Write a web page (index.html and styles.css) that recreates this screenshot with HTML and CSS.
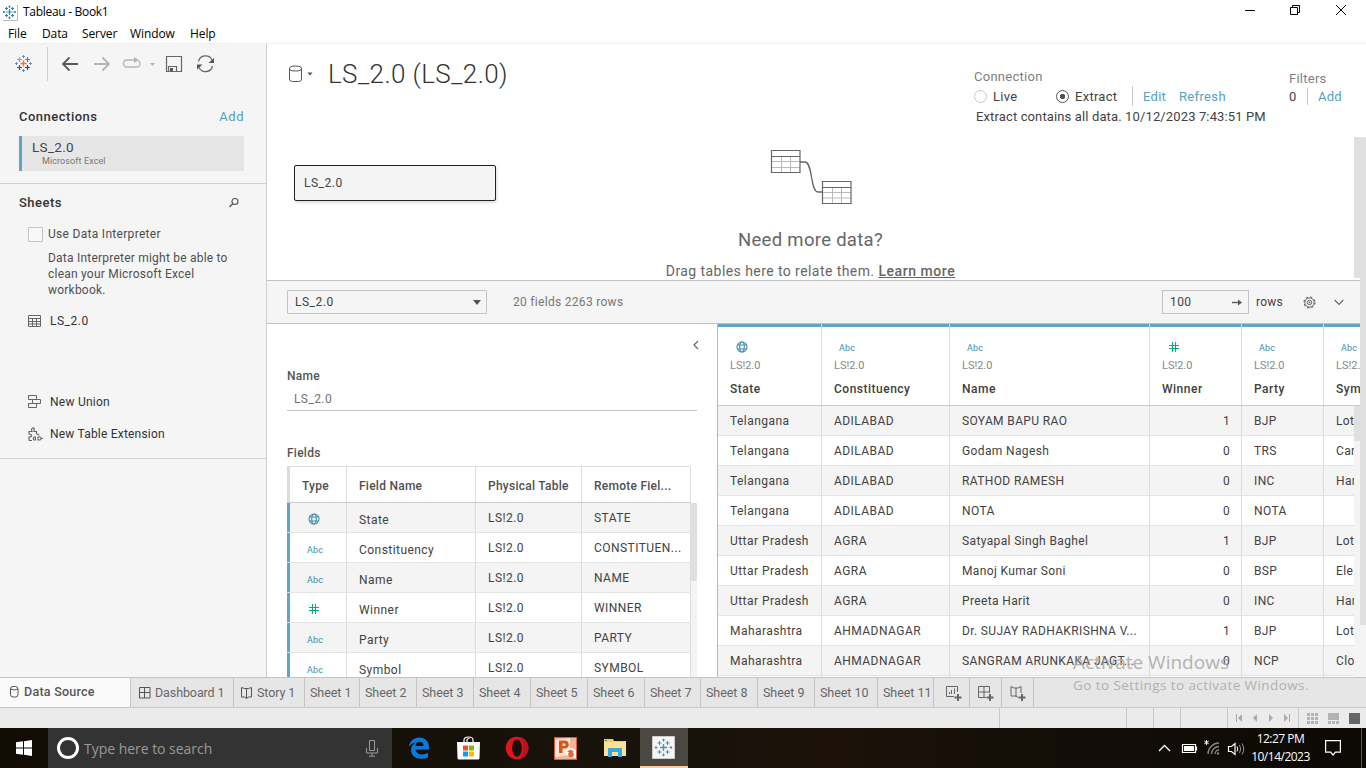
FILE: index.html
```html
<!DOCTYPE html>
<html lang="en">
<head>
<meta charset="utf-8">
<title>Tableau - Book1</title>
<link rel="stylesheet" href="styles.css">
</head>
<body>
<svg class="defs" width="0" height="0">
  <symbol id="globe" viewBox="0 0 12 12"><g fill="none" stroke="#3f8dab" stroke-width="1.100"><circle cx="6" cy="6" r="5"/><ellipse cx="6" cy="6" rx="2.300" ry="5"/><path d="M1.500 4h9M1.500 8h9"/></g></symbol>
  <symbol id="hash" viewBox="0 0 10 10"><path d="M3.500 0v10M6.500 0v10M0 3.500h10M0 6.500h10" stroke="#00b180" stroke-width="1" fill="none"/></symbol>
  <symbol id="plusmark" viewBox="0 0 18 18"><path d="M9 5.500v7M5.500 9h7" stroke-width="1.400"/><path d="M5 2.500v4M3 4.500h4M13 2.500v4M11 4.500h4M5 11.500v4M3 13.500h4M13 11.500v4M11 13.500h4M9 0v3M7.500 1.500h3M9 15v3M7.500 16.500h3M1.500 7.500v3M0 9h3M16.500 7.500v3M15 9h3"/></symbol>
</svg>
<div class="window">
  <header class="titlebar">
    <svg class="app" width="16" height="18" viewBox="0 0 16 18"><path d="M15.500 2v15.500H1" stroke="#bbb" fill="none"/><g stroke="#2f86b0" fill="none" stroke-width="1.200"><path d="M7.500 6v6M4.500 9h6M4.500 4v3M3 5.500h3M10.500 4v3M9 5.500h3M4.500 11v3M3 12.500h3M10.500 11v3M9 12.500h3M7.500 2.500v2.500M6.500 3.500h2M7.500 13.500v2.500M6.500 14.500h2M1 9h2.500M2 8v2M11.500 9h2.500M13 8v2"/></g></svg>
    <span class="caption">Tableau - Book1</span>
    <svg class="controls" width="110" height="12" viewBox="0 0 110 12" fill="none" stroke="#000"><path d="M1 6.500h10M46.500 3.500h7v7h-7zM48.500 3.500v-2h7v7h-2M92 1l10 10M102 1l-10 10"/></svg>
  </header>
  <nav class="menubar"><span>File</span><span>Data</span><span>Server</span><span>Window</span><span>Help</span></nav>

  <div class="body">
    <aside class="sidebar">
      <div class="tools">
        <svg width="220" height="36" viewBox="0 0 220 36" fill="none">
          <path d="M23.500 13.500v6M20.500 16.500h6" stroke="#e8762d" stroke-width="1.400"/>
          <path d="M19.500 10v5M17 12.500h5" stroke="#e8912d" stroke-width="1.200"/><path d="M27.500 10v5M25 12.500h5" stroke="#5b879b" stroke-width="1.200"/>
          <path d="M19.500 18v5M17 20.500h5" stroke="#c72037" stroke-width="1.200"/><path d="M27.500 18v5M25 20.500h5" stroke="#1f457e" stroke-width="1.200"/>
          <path d="M23.500 8v3M22 9.500h3M23.500 22v3M22 23.500h3M16.500 15v3M15 16.500h3M30.500 15v3M29 16.500h3" stroke="#6f8fb0"/>
          <path d="M47.500 0v34" stroke="#d0d0d0"/>
          <g stroke-width="1.800"><path d="M78 17H63M69.500 10.500L63 17l6.500 6.500" stroke="#5a5a5a"/><path d="M94 17h15M102.500 10.500L109 17l-6.500 6.500" stroke="#b5b5b5"/></g>
          <path d="M135 13h-8q-3.500 0-3.500 3.500t3.500 3.500h9.500q3.500 0 3.500-3.500 0-2-1.500-3" stroke="#b5b5b5" stroke-width="1.300"/><path d="M134 10l5 3-5 3z" fill="#b5b5b5"/><path d="M150 16h5l-2.500 3z" fill="#b5b5b5"/>
          <path d="M166.500 9.500h15v15h-15zM168.500 24v-4.500h8v4.500" stroke="#666" stroke-width="1.200"/><path d="M170 21h3v3h-3z" fill="#555"/>
          <path d="M198.500 14.500a7.200 7.200 0 0 1 13.500-1.500M212.500 19a7.200 7.200 0 0 1-13.500 1.500" stroke="#666" stroke-width="1.200"/><path d="M214 11v5h-5.500zM197 22.500v-5h5.500z" fill="#555"/>
        </svg>
      </div>
      <section class="connections">
        <div class="head"><b>Connections</b><a>Add</a></div>
        <div class="conn"><span>LS_2.0</span><small>Microsoft Excel</small></div>
      </section>
      <section class="sheets">
        <div class="head"><b>Sheets</b><svg width="12" height="12" viewBox="0 0 12 12" fill="none" stroke="#555"><circle cx="7" cy="5.500" r="3" stroke-width="1.100"/><path d="M4.700 7.800L1.500 11" stroke-width="1.300"/></svg></div>
        <label class="interp"><i></i><span>Use Data Interpreter</span></label>
        <p>Data Interpreter might be able to<br>clean your Microsoft Excel<br>workbook.</p>
        <div class="item first"><svg width="16" height="14" viewBox="0 0 16 14" fill="none" stroke="#666"><path d="M.5 1.500h12v11H.5zM.5 4.500h12M.5 7.500h12M.5 10h12M4.500 4.500v8M8.500 4.500v8"/></svg>LS_2.0</div>
        <div class="item union"><svg width="16" height="14" viewBox="0 0 16 14" fill="none" stroke="#666"><path d="M.5.500h8v4h-8zM4.500 4.500h8v4h-8zM.5 8.500h8v4h-8z"/></svg>New Union</div>
        <div class="item ext"><svg width="16" height="15" viewBox="0 0 16 15" fill="none" stroke="#666" stroke-width="1.200"><path d="M1 13.500V10q2.500 0 2.500-1.500T1 7V4.500h3Q2.800 1.500 4.800 1T6 4.500h2.500V7q2.500 0 2.500 1.500M1 13.500h3"/><path d="M7.500 10H6q-1.500 1.500 0 3h1.500zM10 10h2q2 1.500 0 3h-2zM13 11.500h2" stroke-width="1.100"/></svg>New Table Extension</div>
      </section>
    </aside>

    <main>
      <div class="top">
        <svg class="ds" width="26" height="18" viewBox="0 0 26 18" fill="none" stroke="#555"><path d="M.5 3.500v10.500q0 2.500 3 2.500h6q3 0 3-2.500V3.500M.5 3.500q0-2.500 6-2.500t6 2.500-6 2.500-6-2.500z"/><path d="M18.500 7.500h5l-2.500 3z" fill="#555" stroke="none"/></svg>
        <h1>LS_2.0 (LS_2.0)</h1>
        <div class="cinfo">
          <div class="lbl">Connection</div>
          <div class="opts"><i class="radio"></i><span class="live">Live</span><i class="radio on"></i><span class="extract">Extract</span><u></u><a class="edit">Edit</a><a class="refresh">Refresh</a></div>
          <div class="stamp">Extract contains all data. 10/12/2023 7:43:51 PM</div>
        </div>
        <div class="filters"><div class="lbl">Filters</div><div class="opts"><span>0</span><u></u><a>Add</a></div></div>
      </div>
      <div class="lower">
        <div class="content">
          <div class="canvas">
            <div class="node">LS_2.0</div>
            <div class="hint">
              <svg width="82" height="56" viewBox="0 0 82 56" fill="none"><path d="M2 11.500h28M2 17.500h28M11.500 6v16M20.500 6v16M53 42.500h28M53 48h28M62.500 37v16M71.500 37v16" stroke="#bbb"/><path d="M1.500 .500h28.500v22H1.500zM1.500 6.500h28.500M52.500 31.500h28.500v22H52.500zM52.500 37.500h28.500" stroke="#666" stroke-width="1.200"/><path d="M30 12h5c8 0 5 30 13 30h4.500" stroke="#666" stroke-width="1.300"/></svg>
              <div class="need">Need more data?</div>
              <div class="drag">Drag tables here to relate them. <b>Learn more</b></div>
            </div>
            <i class="thumb"></i>
          </div>
          <div class="bar">
            <div class="select">LS_2.0<svg width="8" height="5"><path d="M0 0h8L4 5z" fill="#555"/></svg></div>
            <span class="count">20 fields 2263 rows</span>
            <div class="num">100<svg width="10" height="7" viewBox="0 0 10 7"><path d="M0 3.500h8" stroke="#555" stroke-width="1.300"/><path d="M6 .500l4 3-4 3z" fill="#555"/></svg></div>
            <span class="rows">rows</span>
            <svg class="gear" width="13" height="13" viewBox="0 0 13 13" fill="none" stroke="#666"><circle cx="6.500" cy="6.500" r="4.600"/><circle cx="6.500" cy="6.500" r="5.500" stroke-width="1.100" stroke-dasharray="2.160 2.160"/><circle cx="6.500" cy="6.500" r="2.200"/><circle cx="6.500" cy="6.500" r=".5"/></svg>
            <svg class="chev" width="10" height="7" viewBox="0 0 10 7" fill="none" stroke="#666" stroke-width="1.200"><path d="M.7 1L5 5.500 9.300 1"/></svg>
          </div>
          <div class="data">
            <section class="meta">
              <svg class="collapse" width="6" height="10" viewBox="0 0 6 10" fill="none" stroke="#666" stroke-width="1.200"><path d="M5 1L1 5l4 4"/></svg>
              <div class="mlabel">Name</div>
              <div class="field">LS_2.0</div>
              <div class="mlabel two">Fields</div>
              <div class="ftable">
                <div class="fr fh"><span>Type</span><span>Field Name</span><span>Physical Table</span><span>Remote Fiel...</span></div>
                <div class="frows">
                  <div class="flist">
                    <div class="fr"><span class="t"><svg class="globe"><use href="#globe"/></svg></span><span>State</span><span>LS!2.0</span><span>STATE</span></div>
                    <div class="fr"><span class="t">Abc</span><span>Constituency</span><span>LS!2.0</span><span>CONSTITUEN...</span></div>
                    <div class="fr"><span class="t">Abc</span><span>Name</span><span>LS!2.0</span><span>NAME</span></div>
                    <div class="fr"><span class="t"><svg class="hash"><use href="#hash"/></svg></span><span>Winner</span><span>LS!2.0</span><span>WINNER</span></div>
                    <div class="fr"><span class="t">Abc</span><span>Party</span><span>LS!2.0</span><span>PARTY</span></div>
                    <div class="fr"><span class="t">Abc</span><span>Symbol</span><span>LS!2.0</span><span>SYMBOL</span></div>
                  </div>
                  <div class="fscroll"><i></i></div>
                </div>
              </div>
            </section>
            <section class="grid">
              <div class="gr gh">
                <div><em><svg class="globe"><use href="#globe"/></svg></em><small>LS!2.0</small><b>State</b></div>
                <div><em>Abc</em><small>LS!2.0</small><b>Constituency</b></div>
                <div><em>Abc</em><small>LS!2.0</small><b>Name</b></div>
                <div><em><svg class="hash"><use href="#hash"/></svg></em><small>LS!2.0</small><b>Winner</b></div>
                <div><em>Abc</em><small>LS!2.0</small><b>Party</b></div>
                <div><em>Abc</em><small>LS!2.0</small><b>Symbol</b></div>
              </div>
              <div class="grows">
                <div class="glist">
                  <div class="gr"><span>Telangana</span><span>ADILABAD</span><span>SOYAM BAPU RAO</span><span>1</span><span>BJP</span><span>Lot</span></div>
                  <div class="gr"><span>Telangana</span><span>ADILABAD</span><span>Godam Nagesh</span><span>0</span><span>TRS</span><span>Car</span></div>
                  <div class="gr"><span>Telangana</span><span>ADILABAD</span><span>RATHOD RAMESH</span><span>0</span><span>INC</span><span>Han</span></div>
                  <div class="gr"><span>Telangana</span><span>ADILABAD</span><span>NOTA</span><span>0</span><span>NOTA</span><span></span></div>
                  <div class="gr"><span>Uttar Pradesh</span><span>AGRA</span><span>Satyapal Singh Baghel</span><span>1</span><span>BJP</span><span>Lot</span></div>
                  <div class="gr"><span>Uttar Pradesh</span><span>AGRA</span><span>Manoj Kumar Soni</span><span>0</span><span>BSP</span><span>Ele</span></div>
                  <div class="gr"><span>Uttar Pradesh</span><span>AGRA</span><span>Preeta Harit</span><span>0</span><span>INC</span><span>Han</span></div>
                  <div class="gr"><span>Maharashtra</span><span>AHMADNAGAR</span><span>Dr. SUJAY RADHAKRISHNA V...</span><span>1</span><span>BJP</span><span>Lot</span></div>
                  <div class="gr"><span>Maharashtra</span><span>AHMADNAGAR</span><span>SANGRAM ARUNKAKA JAGT...</span><span>0</span><span>NCP</span><span>Clo</span></div>
                  <div class="gr"><span></span><span></span><span></span><span></span><span></span><span></span></div>
                </div>
                <div class="gscroll"><i></i></div>
              </div>
            </section>
          </div>
        </div>
        <div class="vscroll"><i></i></div>
      </div>
    </main>
  </div>

  <div class="tabs">
    <span class="active"><svg width="9" height="12" viewBox="0 0 9 12" fill="none" stroke="#555"><rect x=".5" y=".5" width="7.500" height="10.500" rx="2.500"/><path d="M.5 3q3.700 2 7.500 0"/></svg>Data Source</span>
    <span><svg width="12" height="12" viewBox="0 0 12 12" fill="none" stroke="#555"><path d="M.5.500h10.500v10.500H.5zM5.500.500v10.500M.5 5.500h10.500"/></svg>Dashboard 1</span>
    <span><svg width="12" height="12" viewBox="0 0 12 12" fill="none" stroke="#555"><path d="M.5.500l3 1h4l3-1v9.500l-3 0-2 1.500-2-1.500-3 0zM5.500 2v9"/></svg>Story 1</span>
    <span>Sheet 1</span><span>Sheet 2</span><span>Sheet 3</span><span>Sheet 4</span><span>Sheet 5</span><span>Sheet 6</span><span>Sheet 7</span><span>Sheet 8</span><span>Sheet 9</span><span>Sheet 10</span><span>Sheet 11</span>
    <span class="new"><svg width="17" height="16" viewBox="0 0 17 16" fill="none" stroke="#666"><path d="M8 10.500H.500V.500h11V6M3.500 8V6M5.500 8V4M8.500 8V2.500"/><path d="M12 8v7M8.500 11.500h7" stroke-width="2"/></svg></span>
    <span class="new"><svg width="17" height="16" viewBox="0 0 17 16" fill="none" stroke="#666"><path d="M8 11.500H.500V.500h11V7M6 .500v11M.5 6h11"/><path d="M12 8v7M8.500 11.500h7" stroke-width="2"/></svg></span>
    <span class="new"><svg width="17" height="16" viewBox="0 0 17 16" fill="none" stroke="#666"><path d="M8 11.500l-2-1.500-2 0H1V.500l3 1.500h4l3-1.500V7M6 2v9"/><path d="M12 8v7M8.500 11.500h7" stroke-width="2"/></svg></span>
  </div>
  <div class="status">
    <span></span><span></span><span></span><span></span>
    <span class="pager"><svg width="58" height="8" viewBox="0 0 58 8" fill="#aaa"><path d="M1 0h1v8H1zM7 0v8L3 4zM22 0v8l-4-4zM34 0v8l4-4zM49 0v8l4-4zM54 0h1v8h-1z"/></svg></span>
    <span class="views"><svg width="54" height="11" viewBox="0 0 54 11" fill="#b3b3b3"><path d="M0 0h3v3H0zM4 0h3v3H4zM8 0h3v3H8zM0 4h3v3H0zM4 4h3v3H4zM8 4h3v3H8zM0 8h3v3H0zM4 8h3v3H4zM8 8h3v3H8zM21 0h11v7H21zM21 8h3v3h-3zM25 8h3v3h-3zM29 8h3v3h-3z"/><path d="M42 0h11v11H42z" fill="#666"/></svg></span>
  </div>

  <footer class="taskbar">
    <div class="start"><svg width="16" height="16" viewBox="0 0 16 16" fill="#fff"><path d="M0 2.300l7-1v6.200H0zM8 1.200L16 0v7.500H8zM0 8.500h7v6.200l-7-1zM8 8.500h8V16l-8-1.200z"/></svg></div>
    <div class="search"><i></i><span>Type here to search</span><svg width="12" height="17" viewBox="0 0 12 17" fill="none" stroke="#999"><path d="M3.500.500h5v10h-5zM.5 8v5h11V8M6 13v3M3 16.200h6"/></svg></div>
    <div class="apps">
      <span><svg width="22" height="22" viewBox="0 0 22 22"><path d="M1 10C1.500 4 6 .5 11.500.5 17.500.5 21 5 21 10v2.500H7.500c.3 3.500 3.500 5 6.500 5 2.500 0 4.500-.8 6-1.700v4.400c-2 1.100-4.500 1.600-7 1.600C7 21.800 3 18 3 13c0-3.500 2-6 5-7.500C4.500 6 2.500 7.800 1 10zM7.500 9h8c0-2.800-1.400-4.200-3.800-4.200S7.800 6.300 7.500 9z" fill="#0a7ada"/></svg></span>
      <span><svg width="23" height="24" viewBox="0 0 23 24"><path d="M7 6.500V4q0-3 4.500-3T16 4v2.500M10 6.500V4q0-1.500 2.500-1.500" fill="none" stroke="#fff" stroke-width="1.200"/><path d="M0 6h23l-.5 16q0 1.500-1.500 1.500H2Q.5 23.500.5 22z" fill="#fff"/><path d="M6 9.500h5v5H6z" fill="#f25022"/><path d="M12 9.500h5v5h-5z" fill="#7fba00"/><path d="M6 15.500h5v5H6z" fill="#00a4ef"/><path d="M12 15.500h5v5h-5z" fill="#ffb900"/></svg></span>
      <span><svg width="24" height="24" viewBox="0 0 24 24"><ellipse cx="12" cy="12" rx="11.300" ry="11.300" fill="#e0141f"/><path d="M14 1c6 .5 9.500 5.500 9.500 11S20 22.500 14 23c3-2 4-6.500 4-11s-1-9-4-11z" fill="#b9121c"/><ellipse cx="12" cy="12" rx="4.800" ry="8.800" fill="#15110a"/></svg></span>
      <span><svg width="23" height="23" viewBox="0 0 23 23"><path d="M.5.500h22v22H.5z" fill="#f3b49a" stroke="#e2592c"/><path d="M1 3L16 1v17L1 20z" fill="#fbe5db"/><path d="M5 3.500h6c5 0 5 8 0 8H8.500V16H5zM8.500 6.500v2.500h2c1.500 0 1.500-2.500 0-2.500z" fill="#d9571b" fill-rule="evenodd"/><path d="M12 13l5-2 5 2v8l-5-1-5-3z" fill="#fff"/><path d="M13 14.500l3.500-2 3.500 2-3.500 1.500z" fill="#e8663a"/><circle cx="17" cy="17.500" r="2.800" fill="#e8663a"/></svg></span>
      <span><svg width="22" height="20" viewBox="0 0 22 20"><path d="M0 1h9l1 2h12v15H0z" fill="#f6ce5a"/><path d="M0 4h22v14H0z" fill="#fde292"/><path d="M4 19v-8q0-1 1-1h12q1 0 1 1v8h-4v-5H8v5z" fill="#35a9e6"/><path d="M1 2h2v1H1z" fill="#3a9b50"/></svg></span>
      <span class="on"><svg width="23" height="23" viewBox="0 0 23 23"><path d="M.5.500h22v22H.5z" fill="#f5f5f5" stroke="#ccc"/><g stroke="#4c8fb5" fill="none"><use href="#plusmark" x="2.500" y="2.500" width="18" height="18"/></g></svg></span>
    </div>
    <div class="tray">
      <svg width="90" height="18" viewBox="0 0 90 18" fill="none" stroke="#fff"><path d="M1 12l5.500-5.500L12 12" stroke-width="1.300"/><path d="M24.500 5.500h13v8h-13zM38.500 7.500v4" stroke-width="1.200"/><path d="M26 7h10v5H26z" fill="#fff" stroke="none"/><g stroke="#888" stroke-width="1.300"><path d="M50 15a11 11 0 0 1 11-11M53.500 15A7.500 7.500 0 0 1 61 7.500M57 15a4 4 0 0 1 4-4"/></g><circle cx="60" cy="14.500" r="1.200" fill="#888" stroke="none"/><path d="M48.500 1v5M46.300 2.200l4.400 2.600M50.700 2.200l-4.400 2.600"/><path d="M70.500 7.500h3l3.500-3v11l-3.500-3h-3z" stroke-width="1.200"/><path d="M79 7.500q1.500 2.500 0 5"/><path d="M81.500 6q2.500 4 0 8M84 4.500q3.500 5.500 0 11" stroke="#999"/></svg>
      <div class="clock"><span>12:27 PM</span><span>10/14/2023</span></div>
      <svg class="note" width="16" height="16" viewBox="0 0 16 16" fill="none" stroke="#fff" stroke-width="1.200"><path d="M.6.600h14.800v11.500h-5L8 15l-2.400-2.900h-5z"/></svg>
      <i class="peek"></i>
    </div>
  </footer>
  <div class="watermark"><span>Activate Windows</span><small>Go to Settings to activate Windows.</small></div>
</div>
</body>
</html>
```
FILE: styles.css
```css
* { box-sizing: border-box; }
body { margin: 0; font-family: Roboto, sans-serif; font-size: 12px; letter-spacing: .25px; color: #424242; }
svg { display: block; flex: none; }
.defs { position: absolute; }
i, em { font-style: normal; }
b { font-weight: 500; }
a { color: #56a0bd; }
.window { position: relative; width: 1366px; height: 768px; overflow: hidden; display: flex; flex-direction: column; background: #fff; }

.titlebar { height: 23px; flex: none; display: flex; align-items: center; padding-left: 2px; font-family: "Open Sans", sans-serif; color: #000; letter-spacing: -.3px; }
.caption { margin-left: 5px; line-height: 23px; }
.controls { margin: -3px 12px 0 auto; }
.menubar { height: 20px; flex: none; display: grid; grid-template-columns: 34px 40px 48px 60px auto; padding-left: 8px; font: 12px/21px "Open Sans", sans-serif; color: #000; letter-spacing: -.1px; }
.body { height: 634px; flex: none; display: flex; }

.sidebar { width: 267px; flex: none; background: #f5f5f5; border-right: 1px solid #d0d0d0; border-top: 1px solid #eee; }
.tools { height: 58px; padding-top: 3px; }
.head { display: flex; justify-content: space-between; align-items: center; height: 20px; }
.head b { font-size: 13px; letter-spacing: .5px; color: #333; }
.head a { font-size: 13px; letter-spacing: .5px; }
.connections { height: 82px; padding: 4px 22px 0 19px; border-bottom: 1px solid #d0d0d0; }
.conn { margin-top: 10px; height: 35px; background: #e6e6e6; border-left: 3px solid #5fa5c6; padding: 3px 0 0 10px; }
.conn span { display: block; font-size: 13.500px; line-height: 16px; color: #444; letter-spacing: .3px; }
.conn small { display: block; font-size: 9px; line-height: 13px; margin-left: 10px; color: #777; letter-spacing: .1px; }
.sheets { height: 275px; padding: 8px 0 0 19px; border-bottom: 1px solid #d0d0d0; }
.sheets .head { padding-right: 26px; }
.interp { display: flex; height: 16px; align-items: center; margin: 14px 0 0 9px; color: #4c4c4c; letter-spacing: .3px; }
.interp i { width: 15px; height: 15px; border: 1px solid #c4c4c4; background: #f8f8f8; margin-right: 5px; border-radius: 1px; }
.sheets p { margin: 8px 0 0 29px; line-height: 16px; color: #505050; letter-spacing: .22px; }
.item { display: flex; align-items: center; height: 20px; margin-left: 9px; gap: 6px; color: #333; }
.first { margin-top: 13px; letter-spacing: .5px; }
.union { margin-top: 61px; }
.ext { margin-top: 12px; letter-spacing: .2px; }

main { flex: 1; display: flex; flex-direction: column; min-width: 0; }
.top { height: 94px; border-top: 1px solid #eee; display: flex; align-items: flex-start; padding-left: 22px; }
.ds { margin-top: 21px; }
h1 { margin: 14px 0 0 13px; font-weight: 300; font-size: 26px; line-height: 32px; letter-spacing: .4px; color: #333; }
.cinfo { margin: 23px 0 0 auto; width: 315px; font-size: 13px; letter-spacing: .27px; }
.lbl { color: #808080; line-height: 20px; font-size: 13px; }
.cinfo .opts { margin-top: -1px; }
.opts { display: flex; align-items: center; height: 20px; }
.opts u { width: 1px; height: 20px; background: #c8c8c8; }
.radio { width: 13px; height: 13px; border: 1px solid #c8c8c8; border-radius: 50%; margin-right: 6px; }
.radio.on { border-color: #555; background: radial-gradient(#555 0 2.500px, transparent 3px); }
.live { width: 63px; }
.extract { width: 57px; }
.edit { margin-left: 10px; width: 36px; }
.refresh { letter-spacing: .35px; }
.stamp { margin-left: 2px; line-height: 22px; white-space: nowrap; letter-spacing: .13px; }
.filters { width: 77px; margin-top: 25px; font-size: 13px; }
.filters .lbl { line-height: 20px; height: 19px; }
.filters .opts { height: 17px; }
.filters span { width: 18px; }
.filters u { height: 17px; }
.filters a { margin-left: 10px; }

.lower { flex: 1; display: flex; min-height: 0; }
.content { width: 1093px; }
.canvas { position: relative; height: 143px; overflow: hidden; padding-right: 6px; }
.node { position: absolute; left: 27px; top: 28px; width: 202px; height: 36px; border: 1px solid #222; border-radius: 2px; background: #f4f4f4; line-height: 34px; padding-left: 9px; box-shadow: 1px 2px 3px #0002; letter-spacing: .5px; }
.hint { display: flex; flex-direction: column; align-items: center; padding-top: 13px; color: #666; white-space: nowrap; }
.need { font-size: 18.500px; line-height: 24px; margin-top: 22px; letter-spacing: .3px; }
.drag { font-size: 14px; line-height: 20px; margin-top: 9px; letter-spacing: .43px; }
.drag b { text-decoration: underline; letter-spacing: .55px; }
.thumb { position: absolute; right: 0; top: 0; width: 6px; height: 141px; background: #e0e0e0; }
.bar { height: 44px; background: #f5f5f5; border-top: 1px solid #c0c0c0; border-bottom: 1px solid #c0c0c0; display: flex; align-items: center; padding-left: 20px; }
.select { width: 200px; height: 24px; border: 1px solid #c4c4c4; border-radius: 1px; display: flex; align-items: center; justify-content: space-between; padding: 0 5px 0 7px; letter-spacing: .5px; }
.count { margin-left: 26px; color: #777; letter-spacing: .3px; }
.num { margin-left: auto; width: 87px; height: 24px; border: 1px solid #c4c4c4; display: flex; align-items: center; justify-content: space-between; padding: 0 6px 0 7px; letter-spacing: .4px; }
.rows { margin-left: 7px; width: 47px; letter-spacing: .25px; }
.chev { margin: 0 16px 0 18px; }

.data { display: flex; height: 353px; }
.meta { width: 450px; padding-left: 20px; }
.collapse { margin: 16px 0 0 406px; }
.mlabel { font-weight: 500; color: #555; line-height: 20px; margin-top: 16px; }
.field { width: 410px; height: 25px; border-bottom: 1px solid #c4c4c4; padding: 3px 0 0 7px; line-height: 20px; color: #707070; letter-spacing: .4px; }
.mlabel.two { margin-top: 32px; }
.ftable { margin-top: 3px; width: 410px; height: 211px; overflow: hidden; letter-spacing: .45px; }
.fr { display: grid; grid-template-columns: 60px 129px 106px 109px; width: 404px; height: 30px; line-height: 30px; border-bottom: 1px solid #e4e4e4; white-space: nowrap; }
.fr span { border-right: 1px solid #dcdcdc; padding-left: 12px; height: 100%; overflow: hidden; }
.fr span:first-child { border-left: 3px solid #5fa5c6; }
.fr span:nth-child(2) { padding-top: 2px; }
.fr.fh { height: 37px; line-height: 38px; border-top: 1px solid #dcdcdc; border-bottom-color: #ccc; font-weight: 500; letter-spacing: .25px; color: #505050; }
.fr.fh span:nth-child(2) { padding-top: 0; }
.fr.fh span:first-child { border-left-color: #dcdcdc; }
.fr .t { font-size: 9px; color: #3f8dab; padding: 2px 0 0 17px; letter-spacing: .2px; }
.globe { width: 12px; height: 12px; }
.hash { width: 10px; height: 10px; }
.fr .globe { margin: 8px 0 0 1px; }
.fr .hash { margin: 9px 0 0 2px; }
.frows { display: flex; }
.flist .fr:nth-child(odd), .glist .gr:nth-child(odd) { background: #f4f4f4; }
.fscroll { width: 6px; background: #f4f4f4; }
.fscroll i { display: block; height: 78px; background: #e0e0e0; border-radius: 1px; }

.grid { width: 643px; border-left: 1px solid #b8b8b8; overflow: hidden; }
.gr { display: grid; grid-template-columns: 104px 128px 200px 92px 82px 36px; width: 642px; height: 30px; line-height: 31px; border-bottom: 1px solid #e4e4e4; white-space: nowrap; letter-spacing: .37px; }
.gr > * { border-right: 1px solid #dcdcdc; padding-left: 12px; height: 29px; }
.gr > :last-child { border-right: 0; }
.gr > span:nth-child(-n+2) { letter-spacing: .45px; }
.gr > span:nth-child(4) { text-align: right; padding-right: 11px; }
.gh { height: 82px; border-bottom-color: #ccc; }
.gh > div { height: 81px; background: linear-gradient(#5fa5c6 0 3px, transparent 3px); padding-top: 17px; }
.gh em, .gh small, .gh b { display: block; }
.gh em { font-size: 9px; height: 14px; line-height: 14px; padding-left: 5px; color: #3f8dab; letter-spacing: .2px; }
.gh .globe { margin-left: 1px; }
.gh .hash { position: relative; top: 1px; margin-left: 2px; }
.gh small { font-size: 11px; line-height: 22px; height: 20px; letter-spacing: 0; color: #888; }
.gh b { line-height: 20px; margin-top: 4px; letter-spacing: .5px; color: #404040; }
.grows { display: flex; height: 272px; }
.glist { width: 636px; overflow: hidden; }
.gscroll { width: 6px; background: #f4f4f4; }
.gscroll i { display: block; height: 35px; background: #e0e0e0; }
.vscroll { width: 6px; background: #f4f4f4; }
.vscroll i { display: block; height: 488px; background: #e0e0e0; }

.tabs { height: 31px; flex: none; display: grid; grid-template-columns: 131px 103px 71px 55px repeat(5, 57px) 56px 57px 57px 63px 56px 36px 32px 32px; background: #e6e6e6; border-top: 1px solid #c4c4c4; border-bottom: 1px solid #c8c8c8; color: #666; font-size: 12.500px; letter-spacing: -.05px; }
.tabs span { display: flex; align-items: center; gap: 4px; border-right: 1px solid #c4c4c4; white-space: nowrap; padding-left: 5px; }
.tabs span:nth-child(2) { padding-left: 8px; letter-spacing: -.1px; }
.tabs span:nth-child(3) { padding-left: 7px; letter-spacing: -.1px; }
.tabs .active { background: #fafafa; padding: 0 0 2px 10px; gap: 5px; font-weight: 500; color: #555; letter-spacing: .25px; }
.tabs .new { padding: 2px 0 0 5px; justify-content: center; }
.tabs .new ~ .new { padding-left: 2px; }
.status { height: 20px; flex: none; background: #ebebeb; display: grid; grid-template-columns: 127px 27px 27px 47px 71px 68px; justify-content: end; }
.status span { border-left: 1px solid #c8c8c8; display: flex; align-items: center; }
.status .pager { padding-left: 7px; }
.status .views { padding-left: 8px; }

.taskbar { height: 40px; flex: none; display: flex; background: linear-gradient(90deg, #120c05, #16120a 40%, #1c120a 60%, #120d07 80%, #0c0903); color: #fff; font-family: "Open Sans", sans-serif; }
.start { width: 48px; display: grid; place-items: center; }
.search { width: 344px; background: #333; display: flex; align-items: center; padding: 0 14px 0 9px; color: #999; font-size: 14px; letter-spacing: -.03px; }
.search i { width: 22px; height: 22px; border: 3px solid #fff; border-radius: 50%; margin-right: 5px; }
.search svg { margin-left: auto; }
.apps { display: grid; grid-template-columns: repeat(5, 48.800px) 48px; padding-left: 4px; }
.apps span { display: grid; place-items: center; }
.apps span:not(.on) svg { margin-left: -2px; }
.apps .on { background: #4b4841; border-bottom: 2px solid #ffc8a0; }
.tray { margin-left: auto; display: flex; align-items: center; }
.clock { width: 65px; margin: 0 4px 0 0; font-size: 12px; letter-spacing: -.5px; line-height: 18px; text-align: center; }
.clock span { display: block; }
.note { margin: 0 20px 0 8px; }
.peek { width: 5px; height: 40px; border-left: 1px solid #555; }
.watermark { position: absolute; left: 1073px; top: 650px; font-family: "Open Sans", sans-serif; color: #a8a8a8; opacity: .85; white-space: nowrap; pointer-events: none; letter-spacing: 0; }
.watermark span, .watermark small { display: block; }
.watermark span { font-size: 19px; line-height: 25px; }
.watermark small { font-size: 13.500px; line-height: 20px; letter-spacing: .42px; }
```
